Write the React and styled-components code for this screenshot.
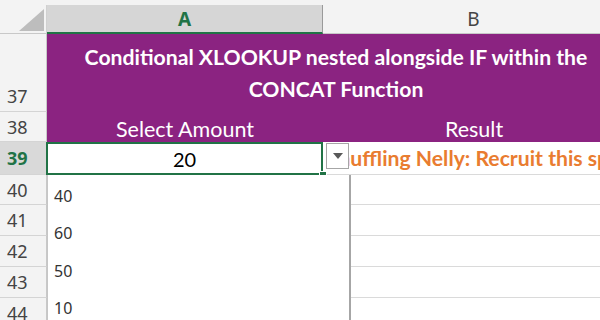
import React from "react";
import styled, { createGlobalStyle } from "styled-components";

const Global = createGlobalStyle`
  html, body { margin: 0; padding: 0; background: #ffffff; }
  body { width: 600px; height: 320px; overflow: hidden; }
`;

const UI_FONT = `"Noto Sans", "Open Sans", "DejaVu Sans", sans-serif`;
const CELL_FONT = `Lato, "Open Sans", sans-serif`;
const PURPLE = "#8b2381";
const GREEN = "#217346";

const Sheet = styled.div`
  position: relative;
  display: grid;
  grid-template-columns: 47px 276px 302px;
  grid-template-rows: 34px 78px 30px 33px 30px 31px 31px 31px 31px;
  background: #f3f3f3;
  width: 625px;
`;

const Corner = styled.div`
  position: relative;
  margin-top: 5px;
  background: #f3f3f3;
  border-bottom: 1px solid #c8c8c8;
  border-right: 1px solid #d0d0d0;
  box-sizing: border-box;
  svg { position: absolute; right: 2px; bottom: 2px; }
`;

const ColHeader = styled.div`
  margin-top: 5px;
  box-sizing: border-box;
  display: flex;
  align-items: center;
  justify-content: center;
  font-family: ${UI_FONT};
  font-size: 19px;
  font-weight: ${(p) => (p.$selected ? 700 : 400)};
  color: ${(p) => (p.$selected ? GREEN : "#444")};
  background: ${(p) => (p.$selected ? "#d6d6d6" : "#f3f3f3")};
  border-bottom: ${(p) => (p.$selected ? `2px solid ${GREEN}` : "1px solid #c8c8c8")};
  border-right: 1px solid ${(p) => (p.$selected ? "#9a9a9a" : "#d0d0d0")};
`;

const RowHeader = styled.div`
  box-sizing: border-box;
  display: flex;
  align-items: ${(p) => (p.$bottom ? "flex-end" : "center")};
  padding: 0 0 ${(p) => (p.$bottom ? "3px" : "0")} 7px;
  font-family: ${UI_FONT};
  font-size: 18px;
  font-weight: ${(p) => (p.$selected ? 700 : 400)};
  color: ${(p) => (p.$selected ? GREEN : "#444")};
  background: ${(p) => (p.$selected ? "#d9d9d9" : "#f3f3f3")};
  border-bottom: 1px solid #d4d4d4;
  border-right: 1px solid #c8c8c8;
`;

const Title = styled.div`
  grid-column: 2 / 4;
  background: ${PURPLE};
  color: #ffffff;
  font-family: ${CELL_FONT};
  font-weight: 700;
  font-size: 21.2px;
  line-height: 32px;
  text-align: center;
  padding-top: 7px;
  box-sizing: border-box;
`;

const SubHeader = styled.div`
  background: ${PURPLE};
  color: #ffffff;
  font-family: ${CELL_FONT};
  font-size: 21.5px;
  display: flex;
  align-items: flex-end;
  justify-content: center;
  padding-bottom: 0px;
  box-sizing: border-box;
`;

const ValueCell = styled.div`
  background: #ffffff;
  border: 2px solid ${GREEN};
  margin-left: -1px;
  box-sizing: border-box;
  display: flex;
  align-items: center;
  justify-content: center;
  font-family: ${CELL_FONT};
  font-size: 20px;
  color: #000;
`;

const ResultCell = styled.div`
  background: #ffffff;
  border-bottom: 1px solid #dadada;
  box-sizing: border-box;
  overflow: hidden;
  white-space: nowrap;
  display: flex;
  align-items: center;
  padding-left: 4px;
  font-family: ${CELL_FONT};
  font-weight: 700;
  font-size: 21.2px;
  color: #e97c30;
`;

const Cell = styled.div`
  background: #ffffff;
  border-bottom: 1px solid #dadada;
  border-right: 1px solid #dadada;
  box-sizing: border-box;
`;

const DropButton = styled.div`
  position: absolute;
  left: 326px;
  top: 143px;
  width: 23px;
  height: 26px;
  box-sizing: border-box;
  background: #ffffff;
  border: 1px solid #a6a6a6;
  display: flex;
  align-items: center;
  justify-content: center;
`;

const FillHandle = styled.div`
  position: absolute;
  left: 319px;
  top: 171px;
  width: 6px;
  height: 5px;
  background: ${GREEN};
  border: 1px solid #fff;
`;

const ListBox = styled.div`
  position: absolute;
  left: 47px;
  top: 175px;
  width: 304px;
  height: 160px;
  box-sizing: border-box;
  background: #ffffff;
  border-left: 1px solid #c6c6c6;
  border-right: 2px solid #a6a6a6;
  padding-top: 2px;
`;

const ListItem = styled.div`
  height: 37.5px;
  display: flex;
  align-items: center;
  padding-left: 6px;
  font-family: ${UI_FONT};
  font-size: 16px;
  color: #333;
`;

const rows = [40, 41, 42, 43, 44];

export default function App() {
  return (
    <>
      <Global />
      <Sheet>
        <Corner>
          <svg width="25" height="22" viewBox="0 0 25 22">
            <polygon points="25,0 25,22 0,22" fill="#bdbdbd" />
          </svg>
        </Corner>
        <ColHeader $selected>A</ColHeader>
        <ColHeader>B</ColHeader>

        <RowHeader $bottom>37</RowHeader>
        <Title>
          Conditional XLOOKUP nested alongside IF within the
          <br />
          CONCAT Function
        </Title>

        <RowHeader>38</RowHeader>
        <SubHeader>Select Amount</SubHeader>
        <SubHeader>Result</SubHeader>

        <RowHeader $selected>39</RowHeader>
        <ValueCell>20</ValueCell>
        <ResultCell>Snuffling Nelly: Recruit this spell</ResultCell>

        {rows.map((r) => (
          <React.Fragment key={r}>
            <RowHeader>{r}</RowHeader>
            <Cell />
            <Cell />
          </React.Fragment>
        ))}

        <DropButton>
          <svg width="10" height="6" viewBox="0 0 10 6">
            <polygon points="0,0 10,0 5,6" fill="#595959" />
          </svg>
        </DropButton>
        <FillHandle />
        <ListBox>
          <ListItem>40</ListItem>
          <ListItem>60</ListItem>
          <ListItem>50</ListItem>
          <ListItem>10</ListItem>
        </ListBox>
      </Sheet>
    </>
  );
}
